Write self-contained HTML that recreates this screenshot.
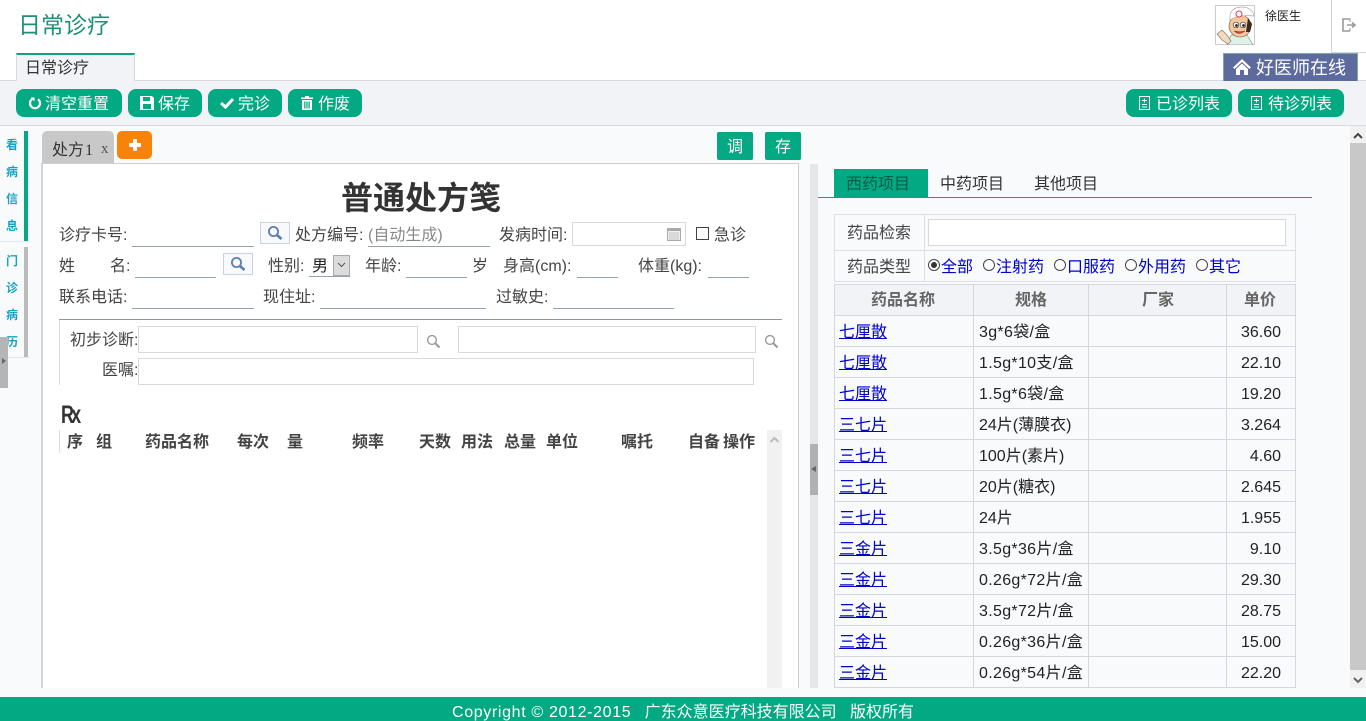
<!DOCTYPE html>
<html lang="zh"><head><meta charset="utf-8"><title>日常诊疗</title>
<style>
html,body{margin:0;padding:0;width:1366px;height:721px;overflow:hidden;background:#f9fafc}
body{position:relative;font-family:"Liberation Sans","Noto Sans CJK SC",sans-serif;font-size:16px;color:#333}
.a,.t{position:absolute}
.t{white-space:nowrap;line-height:22px;height:22px}
.btn{position:absolute;top:89px;height:28px;background:#02a982;border-radius:8px;color:#fff;font-size:16px;line-height:28px;white-space:nowrap;box-sizing:border-box}
.btn svg{position:absolute;top:7px}
.btn span{position:absolute;top:2px}
.u{position:absolute;height:1px;background:#8fa3b3}
.ib{position:absolute;border:1px solid #c9d3df;background:#f7f9fc;box-sizing:border-box}
.inp{position:absolute;border:1px solid #d9d9d9;background:#fff;box-sizing:border-box}
.bold{font-weight:bold}
.nav{position:absolute;left:5px;width:14px;font-size:12px;line-height:14px;color:#17a2c4;font-weight:bold;text-align:center}
.hl{position:absolute;left:834px;width:462px;height:1px;background:#d3d7de}
.vl{position:absolute;width:1px;background:#d3d7de}
.lk{position:absolute;left:839px;color:#00c;text-decoration:underline;line-height:22px;white-space:nowrap}
.sp{position:absolute;left:979px;color:#222;line-height:22px;white-space:nowrap}
.ls{letter-spacing:.32px}
.pr{position:absolute;right:85px;color:#222;line-height:22px;white-space:nowrap;text-align:right}
.blue{color:#00c}
.rd{position:absolute;top:259px;width:12px;height:12px;border:1px solid #444;border-radius:50%;box-sizing:border-box;background:#fff}
</style></head><body>

<!-- header -->
<div class="a" style="left:0;top:0;width:1366px;height:81px;background:#fff"></div>
<div class="t" style="left:18px;top:9px;height:32px;line-height:32px;font-size:23px;color:#1f9078">日常诊疗</div>
<div class="a" style="left:0;top:80px;width:1366px;height:1px;background:#d5dbe2"></div>
<div class="a" style="left:16px;top:53px;width:119px;height:28px;background:#f1f3f6;border:1px solid #d5dbe2;border-top:2px solid #14a085;border-bottom:0;box-sizing:border-box"></div>
<div class="t" style="left:25px;top:58px;color:#333">日常诊疗</div>

<!-- avatar -->
<svg class="a" style="left:1215px;top:5px" width="40" height="40" viewBox="0 0 40 40">
<rect x=".5" y=".5" width="39" height="39" fill="#fff" stroke="#ccc"/>
<path d="M12 40 L16 30 H32 L38 40Z" fill="#dff0e8" stroke="#7fa79a" stroke-width=".7"/>
<path d="M2 29 L7 25 L12 30 L16 36 L13 39 L7 35Z" fill="#f2d9bf" stroke="#8a7a6a" stroke-width=".7"/>
<ellipse cx="25" cy="21" rx="11" ry="11" fill="#f7c79b" stroke="#6a4a30" stroke-width=".6"/>
<path d="M33 13 L37 19 L35 27 L31 27Z" fill="#3a2a20"/>
<path d="M15 15 C14 6 19 2 27 2 C33 2 38 5 39 11 C31 10 22 11 15 15Z" fill="#fff" stroke="#aaa" stroke-width=".7"/>
<circle cx="24" cy="9" r="3" fill="#fff" stroke="#d4475a" stroke-width="1.1"/>
<circle cx="21" cy="20" r="2.8" fill="#fff" stroke="#333" stroke-width=".6"/><circle cx="21.5" cy="20.5" r="1.4" fill="#222"/>
<circle cx="28" cy="20" r="2.8" fill="#fff" stroke="#333" stroke-width=".6"/><circle cx="28.5" cy="20.5" r="1.4" fill="#222"/>
<path d="M19 26 Q24 31 30 26 Q25 27.5 19 26Z" fill="#c4463c" stroke="#8b2f2a" stroke-width=".5"/>
</svg>
<div class="t" style="left:1265px;top:6px;font-size:12px;color:#222;line-height:20px">徐医生</div>
<div class="a" style="left:1331px;top:0;width:1px;height:52px;background:#d5d5d5"></div>
<div class="a" style="left:1331px;top:52px;width:35px;height:1px;background:#d5d5d5"></div>
<svg class="a" style="left:1341px;top:17px" width="16" height="16" viewBox="0 0 16 16" fill="none" stroke="#999" stroke-width="1.6">
<path d="M9 2 H2 V14 H9"/><path d="M9 5 V1.5 M9 14.5 V11" stroke-width="1"/><path d="M6 8 H13 M11 5.5 L14 8 L11 10.5"/></svg>

<div class="a" style="left:1223px;top:53px;width:135px;height:28px;background:#5c6a9e;border:1px solid #7ea7a7;border-bottom:0;box-sizing:border-box"></div>
<svg class="a" style="left:1233px;top:58px" width="18" height="18" viewBox="0 0 18 18" fill="#fff"><path d="M9 1 L18 9.5 L16.4 11 L9 4 L1.6 11 L0 9.5Z"/><path d="M3 11 L9 5.5 L15 11 V17 H11 V12 H7 V17 H3Z"/></svg>
<div class="t" style="left:1256px;top:57px;color:#fff;font-size:18px">好医师在线</div>

<!-- toolbar -->
<div class="a" style="left:0;top:81px;width:1366px;height:45px;background:#f1f3f6;border-bottom:1px solid #d8dce1;box-sizing:border-box"></div>
<div class="btn" style="left:16px;width:106px">
<svg style="left:12px" width="14" height="14" viewBox="0 0 14 14" fill="none" stroke="#fff" stroke-width="2.2"><path d="M4 3.2 A5 5 0 1 0 10 3.2"/><path d="M2.5 1.5 L6.5 1.5 L6.5 5.5Z" fill="#fff" stroke="none"/></svg>
<span style="left:29px">清空重置</span></div>
<div class="btn" style="left:128px;width:74px">
<svg style="left:12px" width="14" height="14" viewBox="0 0 14 14" fill="#fff"><path d="M0 0 H12 L14 2 V14 H0Z M3 1 V5 H10 V1Z M3 8 V13 H11 V8Z" fill-rule="evenodd"/></svg>
<span style="left:30px">保存</span></div>
<div class="btn" style="left:208px;width:74px">
<svg style="left:12px" width="14" height="14" viewBox="0 0 14 14" fill="none" stroke="#fff" stroke-width="3"><path d="M1 7 L5.5 11 L13 3"/></svg>
<span style="left:30px">完诊</span></div>
<div class="btn" style="left:288px;width:74px">
<svg style="left:13px" width="12" height="14" viewBox="0 0 12 14" fill="#fff"><path d="M4 0 H8 V1.5 H12 V3 H0 V1.5 H4Z"/><path d="M1 4 H11 V14 H1Z M3.2 5.5 V12.5 H4.5 V5.5Z M5.4 5.5 V12.5 H6.6 V5.5Z M7.5 5.5 V12.5 H8.8 V5.5Z" fill-rule="evenodd"/></svg>
<span style="left:30px">作废</span></div>
<div class="btn" style="left:1126px;width:106px">
<svg style="left:13px" width="11" height="14" viewBox="0 0 11 14" fill="none" stroke="#fff"><rect x=".5" y=".5" width="10" height="13"/><path d="M3 4.5H8M5.5 2.5V6.5M3 8.5H8M3 11H8"/></svg>
<span style="left:30px">已诊列表</span></div>
<div class="btn" style="left:1238px;width:106px">
<svg style="left:13px" width="11" height="14" viewBox="0 0 11 14" fill="none" stroke="#fff"><rect x=".5" y=".5" width="10" height="13"/><path d="M3 4.5H8M5.5 2.5V6.5M3 8.5H8M3 11H8"/></svg>
<span style="left:30px">待诊列表</span></div>

<!-- left nav -->
<div class="a" style="left:24px;top:131px;width:4px;height:110px;background:#02a982"></div>
<div class="a" style="left:24px;top:247px;width:4px;height:110px;background:#bbb"></div>
<div class="a" style="left:0;top:241px;width:30px;height:1px;background:#e3e6ea"></div>
<div class="a" style="left:0;top:357px;width:30px;height:1px;background:#e3e6ea"></div>
<div class="nav" style="top:138px">看</div><div class="nav" style="top:165px">病</div><div class="nav" style="top:192px">信</div><div class="nav" style="top:219px">息</div>
<div class="nav" style="top:254px">门</div><div class="nav" style="top:281px">诊</div><div class="nav" style="top:308px">病</div><div class="nav" style="top:335px">历</div>
<div class="a" style="left:0;top:337px;width:8px;height:51px;background:#b5b5b5"></div>
<div class="a" style="left:2px;top:358px;width:0;height:0;border-left:4px solid #666;border-top:3px solid transparent;border-bottom:3px solid transparent"></div>

<!-- prescription tabs -->
<div class="a" style="left:42px;top:131px;width:72px;height:33px;background:#c8c8c8;border-radius:5px 5px 0 0"></div>
<div class="t" style="left:52px;top:140px;color:#333">处方<span style="font-family:'Liberation Serif',serif;margin-left:1px">1</span></div>
<div class="t" style="left:101px;top:138px;color:#555;font-family:'Liberation Serif',serif;font-size:15px">x</div>
<div class="a" style="left:117px;top:131px;width:35px;height:28px;background:#f98209;border-radius:5px"></div>
<div class="a" style="left:129px;top:143px;width:12px;height:4px;background:#fff;border-radius:1px"></div>
<div class="a" style="left:133px;top:139px;width:4px;height:12px;background:#fff;border-radius:1px"></div>
<div class="a" style="left:717px;top:132px;width:36px;height:28px;background:#02a982;border-radius:2px;color:#fff;text-align:center;line-height:32px">调</div>
<div class="a" style="left:765px;top:132px;width:36px;height:28px;background:#02a982;border-radius:2px;color:#fff;text-align:center;line-height:32px">存</div>

<!-- prescription paper -->
<div class="a" style="left:41px;top:163px;width:758px;height:525px;background:#fff;border:1px solid #cfcfcf;border-left:2px solid #d4d4d4;border-bottom:0;box-sizing:border-box"></div>
<div class="t bold" style="left:341px;top:178px;height:40px;line-height:40px;font-size:32px;color:#333">普通处方笺</div>

<div class="t" style="left:59px;top:225px;color:#444">诊疗卡号:</div><div class="u" style="left:132px;top:246px;width:122px"></div>
<div class="ib" style="left:260px;top:222px;width:30px;height:22px"></div>
<svg class="a" style="left:267px;top:225px" width="16" height="16" viewBox="0 0 16 16" fill="none" stroke="#5a7fb0" stroke-width="1.8"><circle cx="6.5" cy="6.5" r="4.6"/><path d="M10 10 L14.5 14" stroke-width="2.6"/></svg>
<div class="t" style="left:295px;top:225px;color:#444">处方编号:</div>
<div class="t" style="left:368px;top:225px;color:#888">(自动生成)</div><div class="u" style="left:368px;top:246px;width:122px"></div>
<div class="t" style="left:499px;top:225px;color:#444">发病时间:</div>
<div class="inp" style="left:572px;top:222px;width:114px;height:24px"></div>
<svg class="a" style="left:667px;top:227px" width="14" height="14" viewBox="0 0 14 14"><rect x=".5" y="1.5" width="13" height="12" fill="#eee" stroke="#aaa"/><rect x="1" y="1" width="12" height="3" fill="#aaa"/><path d="M2.5 6H11.5M2.5 8H11.5M2.5 10H11.5M2.5 12H11.5" stroke="#999" stroke-dasharray="1 1"/></svg>
<div class="a" style="left:696px;top:227px;width:13px;height:13px;border:1px solid #444;box-sizing:border-box;background:#fff"></div>
<div class="t" style="left:714px;top:225px;color:#444">急诊</div>

<div class="t" style="left:59px;top:256px;color:#444">姓</div><div class="t" style="left:110px;top:256px;color:#444">名:</div>
<div class="u" style="left:135px;top:277px;width:81px"></div>
<div class="ib" style="left:223px;top:253px;width:30px;height:22px"></div>
<svg class="a" style="left:230px;top:256px" width="16" height="16" viewBox="0 0 16 16" fill="none" stroke="#5a7fb0" stroke-width="1.8"><circle cx="6.5" cy="6.5" r="4.6"/><path d="M10 10 L14.5 14" stroke-width="2.6"/></svg>
<div class="t" style="left:268px;top:256px;color:#444">性别:</div>
<div class="t" style="left:312px;top:256px;color:#222">男</div><div class="u" style="left:309px;top:276px;width:41px"></div>
<div class="a" style="left:333px;top:255px;width:17px;height:21px;background:#dcdcdc;border:1px solid #aaa;box-sizing:border-box"></div>
<svg class="a" style="left:337px;top:262px" width="9" height="6" viewBox="0 0 9 6" fill="none" stroke="#555"><path d="M1 1 L4.5 4.5 L8 1"/></svg>
<div class="t" style="left:365px;top:256px;color:#444">年龄:</div><div class="u" style="left:406px;top:277px;width:61px"></div>
<div class="t" style="left:472px;top:256px;color:#444">岁</div>
<div class="t" style="left:503px;top:256px;color:#444">身高(cm):</div><div class="u" style="left:577px;top:277px;width:41px"></div>
<div class="t" style="left:638px;top:256px;color:#444">体重(kg):</div><div class="u" style="left:708px;top:277px;width:41px"></div>

<div class="t" style="left:59px;top:287px;color:#444">联系电话:</div><div class="u" style="left:132px;top:308px;width:122px"></div>
<div class="t" style="left:263px;top:287px;color:#444">现住址:</div><div class="u" style="left:320px;top:308px;width:166px"></div>
<div class="t" style="left:496px;top:287px;color:#444">过敏史:</div><div class="u" style="left:553px;top:308px;width:121px"></div>

<div class="a" style="left:59px;top:319px;width:723px;height:1px;background:#8a9a9a"></div>
<div class="a" style="left:59px;top:320px;width:1px;height:65px;background:#ddd"></div>
<div class="t" style="left:70px;top:330px;color:#444">初步诊断:</div>
<div class="inp" style="left:138px;top:326px;width:280px;height:27px"></div>
<svg class="a" style="left:426px;top:334px" width="15" height="15" viewBox="0 0 15 15" fill="none" stroke="#999" stroke-width="1.4"><circle cx="6" cy="6" r="4.4"/><path d="M9.5 9.5 L13.5 13.5" stroke-width="2"/></svg>
<div class="inp" style="left:458px;top:326px;width:298px;height:27px"></div>
<svg class="a" style="left:764px;top:334px" width="15" height="15" viewBox="0 0 15 15" fill="none" stroke="#999" stroke-width="1.4"><circle cx="6" cy="6" r="4.4"/><path d="M9.5 9.5 L13.5 13.5" stroke-width="2"/></svg>
<div class="t" style="left:102px;top:360px;color:#444">医嘱:</div>
<div class="inp" style="left:138px;top:358px;width:616px;height:27px"></div>

<div class="t bold" style="left:61px;top:403px;height:24px;line-height:24px;font-size:25px;color:#333;letter-spacing:-4px;transform:scaleX(.72);transform-origin:left center">Rx</div>
<div class="a" style="left:59px;top:430px;width:1px;height:23px;background:#ddd"></div>
<div class="t bold" style="left:67px;top:432px;color:#444">序</div>
<div class="t bold" style="left:96px;top:432px;color:#444">组</div>
<div class="t bold" style="left:145px;top:432px;color:#444">药品名称</div>
<div class="t bold" style="left:237px;top:432px;color:#444">每次</div>
<div class="t bold" style="left:287px;top:432px;color:#444">量</div>
<div class="t bold" style="left:352px;top:432px;color:#444">频率</div>
<div class="t bold" style="left:419px;top:432px;color:#444">天数</div>
<div class="t bold" style="left:461px;top:432px;color:#444">用法</div>
<div class="t bold" style="left:504px;top:432px;color:#444">总量</div>
<div class="t bold" style="left:546px;top:432px;color:#444">单位</div>
<div class="t bold" style="left:621px;top:432px;color:#444">嘱托</div>
<div class="t bold" style="left:688px;top:432px;color:#444">自备</div>
<div class="t bold" style="left:723px;top:432px;color:#444">操作</div>
<div class="a" style="left:767px;top:430px;width:15px;height:258px;background:#f1f1f1"></div>
<svg class="a" style="left:769px;top:436px" width="11" height="8" viewBox="0 0 11 8" fill="none" stroke="#bbb" stroke-width="2"><path d="M1.5 6 L5.5 2 L9.5 6"/></svg>

<!-- splitter -->
<div class="a" style="left:810px;top:164px;width:8px;height:524px;background:#e6e6e6"></div>
<div class="a" style="left:810px;top:444px;width:8px;height:51px;background:#b0b0b0"></div>
<div class="a" style="left:811px;top:466px;width:0;height:0;border-right:5px solid #666;border-top:3px solid transparent;border-bottom:3px solid transparent"></div>

<!-- right tabs -->
<div class="a" style="left:834px;top:169px;width:94px;height:29px;background:#02a982"></div>
<div class="t" style="left:846px;top:174px;color:#0b5b4a">西药项目</div>
<div class="t" style="left:940px;top:174px;color:#333">中药项目</div>
<div class="t" style="left:1034px;top:174px;color:#333">其他项目</div>
<div class="a" style="left:818px;top:197px;width:494px;height:1px;background:#14a085"></div>

<!-- search form -->
<div class="a" style="left:834px;top:214px;width:462px;height:68px;border:1px solid #dcdfe4;box-sizing:border-box"></div>
<div class="a" style="left:834px;top:250px;width:462px;height:1px;background:#dcdfe4"></div>
<div class="a" style="left:924px;top:214px;width:1px;height:68px;background:#dcdfe4"></div>
<div class="t" style="left:847px;top:223px;color:#444">药品检索</div>
<div class="inp" style="left:928px;top:219px;width:358px;height:27px"></div>
<div class="t" style="left:847px;top:257px;color:#444">药品类型</div>
<div class="rd" style="left:928px;top:259px"></div><div class="a" style="left:931px;top:262px;width:6px;height:6px;border-radius:50%;background:#333"></div>
<div class="t blue" style="left:941px;top:257px">全部</div>
<div class="rd" style="left:983px"></div><div class="t blue" style="left:996px;top:257px">注射药</div>
<div class="rd" style="left:1054px"></div><div class="t blue" style="left:1067px;top:257px">口服药</div>
<div class="rd" style="left:1125px"></div><div class="t blue" style="left:1138px;top:257px">外用药</div>
<div class="rd" style="left:1196px"></div><div class="t blue" style="left:1209px;top:257px">其它</div>

<!-- table -->
<div class="a" style="left:834px;top:284px;width:462px;height:31px;background:#f1f3f6"></div>
<div class="hl" style="top:284px"></div><div class="hl" style="top:315px"></div><div class="hl" style="top:346px"></div><div class="hl" style="top:377px"></div><div class="hl" style="top:408px"></div><div class="hl" style="top:439px"></div><div class="hl" style="top:470px"></div><div class="hl" style="top:501px"></div><div class="hl" style="top:532px"></div><div class="hl" style="top:563px"></div><div class="hl" style="top:594px"></div><div class="hl" style="top:625px"></div><div class="hl" style="top:656px"></div><div class="hl" style="top:687px"></div>
<div class="vl" style="left:834px;top:284px;height:404px"></div><div class="vl" style="left:973px;top:284px;height:404px"></div><div class="vl" style="left:1088px;top:284px;height:404px"></div><div class="vl" style="left:1226px;top:284px;height:404px"></div><div class="vl" style="left:1295px;top:284px;height:404px"></div>
<div class="t bold" style="left:871px;top:290px;color:#666">药品名称</div>
<div class="t bold" style="left:1015px;top:290px;color:#666">规格</div>
<div class="t bold" style="left:1142px;top:290px;color:#666">厂家</div>
<div class="t bold" style="left:1244px;top:290px;color:#666">单价</div>

<div class="lk" style="top:322px">七厘散</div><div class="sp ls" style="top:322px">3g*6袋/盒</div><div class="pr" style="top:322px">36.60</div>
<div class="lk" style="top:353px">七厘散</div><div class="sp ls" style="top:353px">1.5g*10支/盒</div><div class="pr" style="top:353px">22.10</div>
<div class="lk" style="top:384px">七厘散</div><div class="sp ls" style="top:384px">1.5g*6袋/盒</div><div class="pr" style="top:384px">19.20</div>
<div class="lk" style="top:415px">三七片</div><div class="sp" style="top:415px">24片(薄膜衣)</div><div class="pr" style="top:415px">3.264</div>
<div class="lk" style="top:446px">三七片</div><div class="sp" style="top:446px">100片(素片)</div><div class="pr" style="top:446px">4.60</div>
<div class="lk" style="top:477px">三七片</div><div class="sp" style="top:477px">20片(糖衣)</div><div class="pr" style="top:477px">2.645</div>
<div class="lk" style="top:508px">三七片</div><div class="sp" style="top:508px">24片</div><div class="pr" style="top:508px">1.955</div>
<div class="lk" style="top:539px">三金片</div><div class="sp ls" style="top:539px">3.5g*36片/盒</div><div class="pr" style="top:539px">9.10</div>
<div class="lk" style="top:570px">三金片</div><div class="sp ls" style="top:570px">0.26g*72片/盒</div><div class="pr" style="top:570px">29.30</div>
<div class="lk" style="top:601px">三金片</div><div class="sp ls" style="top:601px">3.5g*72片/盒</div><div class="pr" style="top:601px">28.75</div>
<div class="lk" style="top:632px">三金片</div><div class="sp ls" style="top:632px">0.26g*36片/盒</div><div class="pr" style="top:632px">15.00</div>
<div class="lk" style="top:663px">三金片</div><div class="sp ls" style="top:663px">0.26g*54片/盒</div><div class="pr" style="top:663px">22.20</div>

<!-- page scrollbar -->
<div class="a" style="left:1350px;top:126px;width:16px;height:562px;background:#f1f1f1"></div>
<div class="a" style="left:1350px;top:143px;width:16px;height:527px;background:#c8c8c8"></div>
<svg class="a" style="left:1352px;top:131px" width="12" height="9" viewBox="0 0 12 9" fill="none" stroke="#444" stroke-width="2"><path d="M2 7 L6 3 L10 7"/></svg>
<svg class="a" style="left:1352px;top:676px" width="12" height="9" viewBox="0 0 12 9" fill="none" stroke="#666" stroke-width="2"><path d="M2 2 L6 6 L10 2"/></svg>

<!-- footer -->
<div class="a" style="left:0;top:697px;width:1366px;height:24px;overflow:hidden;background:#02a982;color:#fff;text-align:center;font-size:16px;line-height:31px;white-space:nowrap"><span style="letter-spacing:.65px">Copyright © 2012-2015</span> &nbsp;&nbsp;广东众意医疗科技有限公司 &nbsp;&nbsp;版权所有</div>
</body></html>
